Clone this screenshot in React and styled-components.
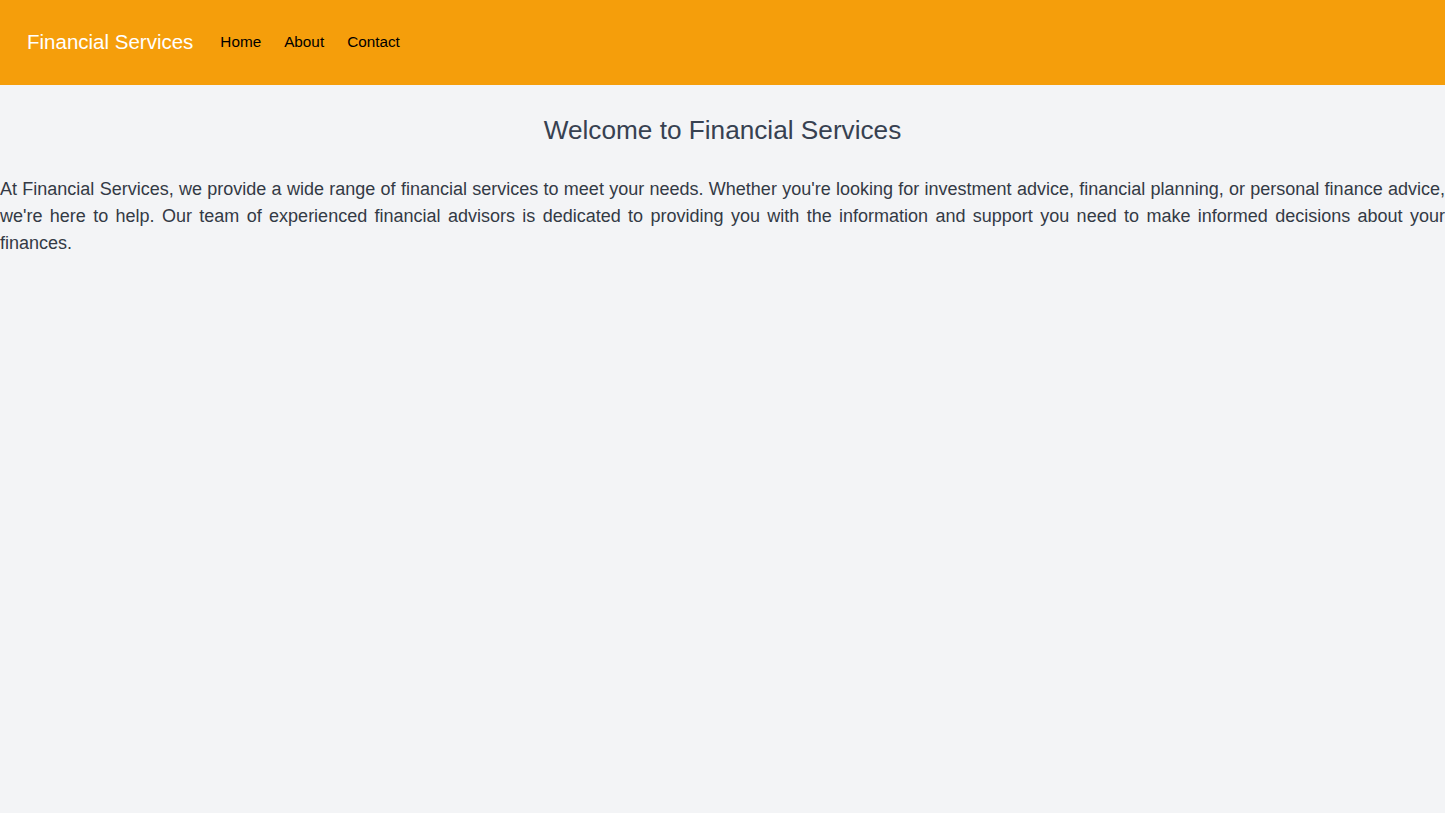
import React from "react";
import styled, { createGlobalStyle } from "styled-components";

const GlobalStyle = createGlobalStyle`
  body {
    margin: 0;
    background: #f3f4f6;
    font-family: "Liberation Sans", Arial, sans-serif;
  }
`;

const Nav = styled.nav`
  display: flex;
  align-items: center;
  gap: 27px;
  height: 85px;
  padding: 0 27px 2px;
  box-sizing: border-box;
  background: #f59e0b;
`;

const Brand = styled.a`
  font-size: 20.5px;
  color: #ffffff;
  text-decoration: none;
`;

const Links = styled.div`
  display: flex;
  gap: 23px;
`;

const NavLink = styled.a`
  font-size: 15.3px;
  color: #000000;
  text-decoration: none;
`;

const Main = styled.main`
  padding-top: 29px;
`;

const Title = styled.h1`
  margin: 0 0 30px;
  font-size: 26.2px;
  line-height: 32px;
  font-weight: 400;
  text-align: center;
  color: #374151;
`;

const Text = styled.p`
  margin: 0;
  font-size: 18px;
  line-height: 27px;
  text-align: justify;
  color: #333a45;
`;

export default function App() {
  return (
    <>
      <GlobalStyle />
      <Nav>
        <Brand href="#">Financial Services</Brand>
        <Links>
          <NavLink href="#">Home</NavLink>
          <NavLink href="#">About</NavLink>
          <NavLink href="#">Contact</NavLink>
        </Links>
      </Nav>
      <Main>
        <Title>Welcome to Financial Services</Title>
        <Text>
          At Financial Services, we provide a wide range of financial services to meet your needs. Whether you're looking
          for investment advice, financial planning, or personal finance advice, we're here to help. Our team of
          experienced financial advisors is dedicated to providing you with the information and support you need to make
          informed decisions about your finances.
        </Text>
      </Main>
    </>
  );
}
